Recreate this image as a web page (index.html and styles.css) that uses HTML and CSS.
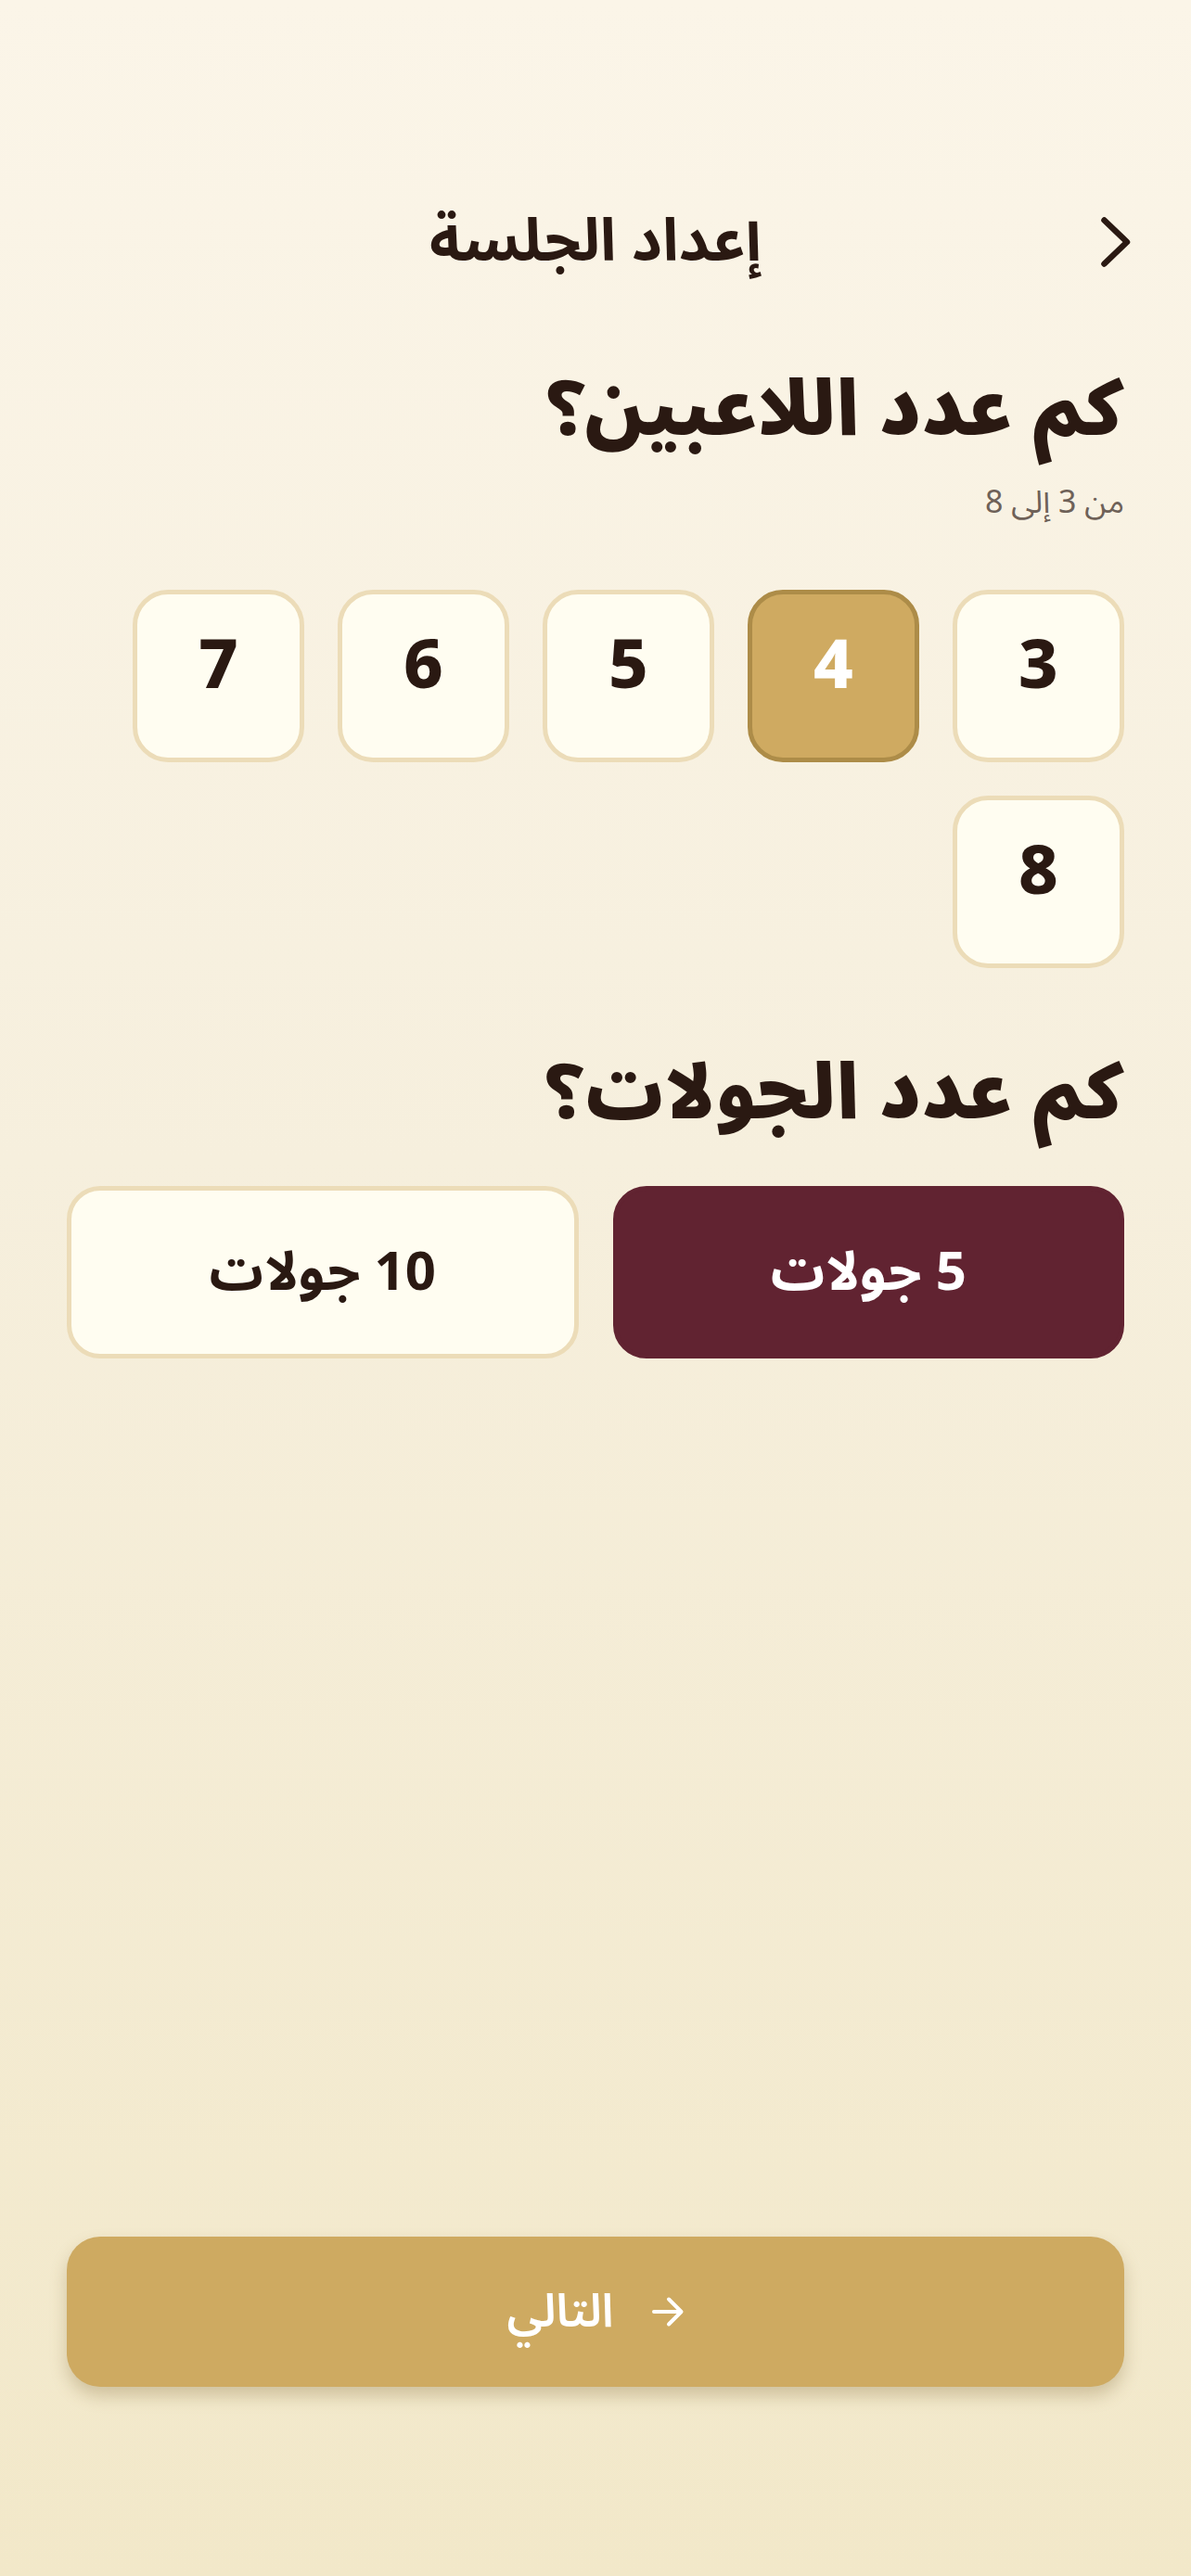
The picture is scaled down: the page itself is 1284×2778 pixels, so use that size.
FILE: index.html
```html
<!DOCTYPE html>
<html lang="ar" dir="rtl">
<head>
<meta charset="utf-8">
<meta name="viewport" content="width=device-width, initial-scale=1">
<title>إعداد الجلسة</title>
<link rel="stylesheet" href="styles.css">
</head>
<body>
<div class="screen">
  <header class="topbar">
    <button class="back" aria-label="رجوع">
      <svg class="back-icon" viewBox="0 0 32 54" width="32" height="54" aria-hidden="true">
        <path d="M3.5 3.5 L28 27 L3.5 50.5" fill="none" stroke="#2a1912" stroke-width="6.5" stroke-linecap="round" stroke-linejoin="round"/>
      </svg>
    </button>
    <h1 class="title">إعداد الجلسة</h1>
    <span class="topbar-spacer"></span>
  </header>

  <section class="section players">
    <h2 class="question">كم عدد اللاعبين؟</h2>
    <p class="hint">من 3 إلى 8</p>
    <div class="tiles">
      <button class="tile">3</button>
      <button class="tile tile-selected">4</button>
      <button class="tile">5</button>
      <button class="tile">6</button>
      <button class="tile">7</button>
      <button class="tile">8</button>
    </div>
  </section>

  <section class="section rounds">
    <h2 class="question">كم عدد الجولات؟</h2>
    <div class="round-options">
      <button class="round round-selected">5 جولات</button>
      <button class="round">10 جولات</button>
    </div>
  </section>

  <footer class="footer">
    <button class="next">
      <svg class="next-arrow" viewBox="0 0 36 34" width="36" height="34" aria-hidden="true">
        <path d="M3 17 H32 M19 3.5 L32.5 17 L19 30.5" fill="none" stroke="#ffffff" stroke-width="4" stroke-linecap="round" stroke-linejoin="round"/>
      </svg>
      <span class="next-label">التالي</span>
    </button>
  </footer>
</div>
</body>
</html>
```
FILE: styles.css
```css
* {
  box-sizing: border-box;
}

html, body {
  margin: 0;
  padding: 0;
}

body {
  font-family: "Noto Sans Arabic", "Noto Sans", "DejaVu Sans", sans-serif;
  color: #2a1912;
  background: linear-gradient(180deg, #fbf5e8 0%, #f6efdd 45%, #f2e8c9 100%);
  min-height: 100vh;
}

.screen {
  min-height: 100vh;
  display: flex;
  flex-direction: column;
  padding: 213px 72px 204px;
}

button {
  font-family: inherit;
  cursor: pointer;
}

.topbar {
  display: grid;
  grid-template-columns: 1fr auto 1fr;
  align-items: center;
  height: 96px;
}

.back {
  justify-self: start;
  background: none;
  border: 0;
  padding: 0;
  margin-inline-start: -7px;
  display: flex;
  align-items: center;
  justify-content: center;
}

.back-icon {
  display: block;
}

.title {
  margin: 0;
  font-size: 64px;
  font-weight: 700;
  line-height: 96px;
  text-align: center;
}

.section {
  display: flex;
  flex-direction: column;
}

.players {
  margin-top: 84px;
}

.question {
  margin: 0;
  font-size: 82px;
  font-weight: 900;
  line-height: 100px;
}

.hint {
  margin: 25px 0 0;
  font-size: 34px;
  line-height: 48px;
  color: #6e6158;
}

.tiles {
  margin-top: 70px;
  display: flex;
  flex-wrap: wrap;
  gap: 36px;
}

.tile {
  width: 185px;
  height: 186px;
  border-radius: 38px;
  border: 5px solid #ecdcb8;
  background: #fffdf1;
  color: #2a1912;
  font-size: 74px;
  font-weight: 800;
  line-height: 1;
  padding: 0 0 20px;
  display: flex;
  align-items: center;
  justify-content: center;
}

.tile-selected {
  background: #cfaa61;
  border-color: #ad8c48;
  color: #ffffff;
}

.rounds {
  margin-top: 86px;
}

.round-options {
  margin-top: 49px;
  display: grid;
  grid-template-columns: 1fr 1fr;
  gap: 37px;
}

.round {
  height: 186px;
  border-radius: 36px;
  border: 5px solid #ecdcb8;
  background: #fffdf1;
  color: #2a1912;
  font-size: 58px;
  font-weight: 700;
  padding: 0;
  display: flex;
  align-items: center;
  justify-content: center;
}

.round-selected {
  background: #612331;
  border-color: #612331;
  color: #ffffff;
}

.footer {
  margin-top: auto;
}

.next {
  width: 100%;
  height: 162px;
  border: 0;
  border-radius: 36px;
  background: #ceaa61;
  color: #ffffff;
  font-size: 50px;
  font-weight: 600;
  display: flex;
  align-items: center;
  justify-content: center;
  gap: 40px;
  box-shadow: 0 10px 18px rgba(120, 92, 40, 0.28);
}

.next-arrow {
  display: block;
}
```
